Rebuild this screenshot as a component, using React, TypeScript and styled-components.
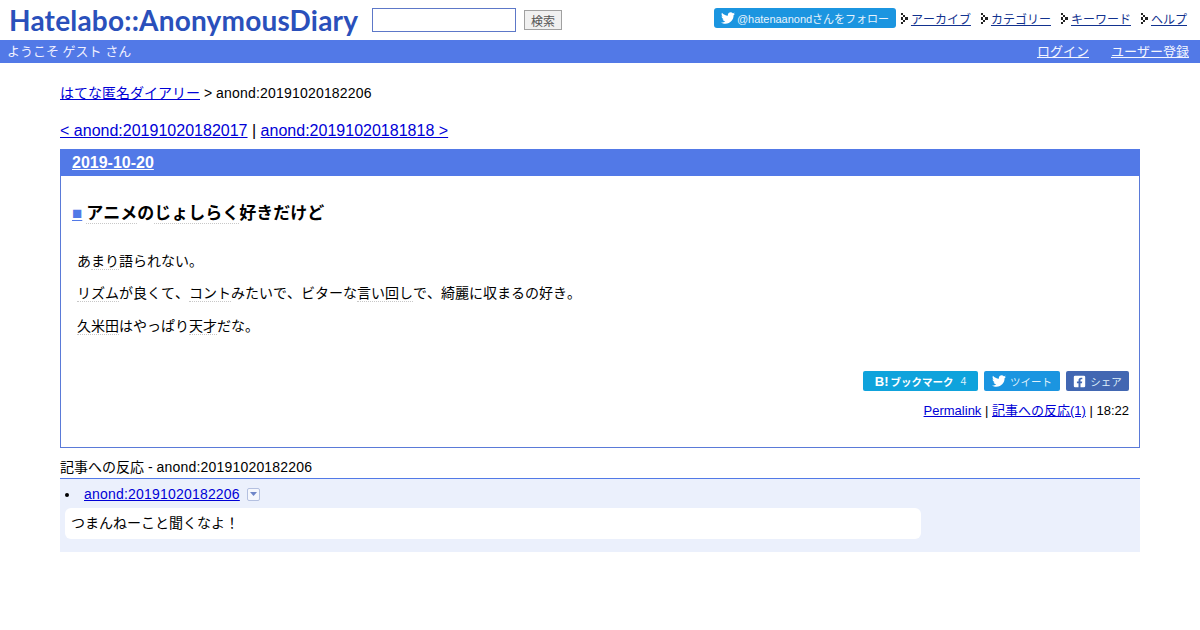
import React from "react";
import styled, { createGlobalStyle } from "styled-components";
import { FaTwitter, FaFacebookSquare } from "react-icons/fa";

const Global = createGlobalStyle`
  html, body { margin: 0; padding: 0; background: #fff; }
  body { font-family: "Liberation Sans", "Noto Sans CJK JP", sans-serif; font-size: 14px; color: #000; text-spacing-trim: space-all; font-kerning: none; }
  a { color: #0000d6; }
`;

const Page = styled.div`width: 1200px; height: 630px; overflow: hidden;`;
const Header = styled.header`height: 40px; display: flex; align-items: center; padding: 0 13px 0 9px; box-sizing: border-box;`;
const Logo = styled.div`
  width: 349px; font-size: 28px; line-height: 40px; font-weight: 700; color: #2a50bb; white-space: nowrap;
  font-family: "Lato", "Liberation Sans", sans-serif; letter-spacing: 0.2px; font-kerning: normal;
`;
const SearchInput = styled.input`
  width: 144px; height: 24px; box-sizing: border-box; margin-left: 14px; border: 1px solid #5d78c8; padding: 0; background: #fff;
`;
const SearchButton = styled.button`
  width: 38px; height: 20px; margin-left: 8px; padding: 0; border: 1px solid #a0a0a0; background: #f0f0f0; color: #555; font: 12px "Liberation Sans", "Noto Sans CJK JP", sans-serif;
`;
const HeaderRight = styled.div`margin-left: auto; display: flex; align-items: center; height: 20px; margin-top: -4px;`;
const FollowButton = styled.a`
  height: 20px; width: 182px; box-sizing: border-box; padding-left: 7px; border-radius: 3px; background: #1b95e0; color: #e6f3fc; display: flex; align-items: center; gap: 2px; font-size: 11px; letter-spacing: -0.02px; text-decoration: none; white-space: nowrap; margin-right: 5px;
  svg { color: #fff; }
`;
const NavItem = styled.a`
  display: flex; align-items: center; gap: 3px; font-size: 12px; color: #12328f; margin-right: 10px; white-space: nowrap;
  &:last-child { margin-right: 0; }
`;
const Bar = styled.div`height: 23px; box-sizing: border-box; padding: 0 11px 2px 7px; background: #5279e7; color: #f0f0ff; display: flex; justify-content: space-between; align-items: center; font-size: 13px;`;
const BarLinks = styled.div`display: flex; gap: 22px; a { color: #f4f6ff; }`;
const Content = styled.main`padding: 21px 60px 0;`;
const Crumb = styled.div`line-height: 18px; height: 18px;`;
const Latin = styled.span`letter-spacing: 0.2px;`;
const Pager = styled.div`font-size: 16px; line-height: 20px; margin-top: 19px; height: 20px; letter-spacing: 0.01px;`;
const Section = styled.section`margin-top: 8px; border: 1px solid #5a7ad8; height: 299px; box-sizing: border-box;`;
const DateHead = styled.h2`
  margin: -1px -1px 0; height: 27px; background: #5279e7; font-size: 16px; line-height: 27px; padding-left: 12px;
  a { color: #fff; }
`;
const Title = styled.h3`
  margin: 26px 0 0 11px; font-size: 17px; line-height: 24px; display: flex; gap: 4px; font-weight: 700;
`;
const Square = styled.a`color: #5279e7; font-size: 17px; font-family: "Liberation Sans", sans-serif;`;
const KW = styled.span`border-bottom: 1px dotted #c8c8c8;`;
const Body = styled.div`
  margin: 25px 0 0 16px;
  p { margin: 0 0 12px; line-height: 20px; }
  p + p + p { margin-top: 13px; }
`;
const Share = styled.div`display: flex; justify-content: flex-end; gap: 6px; margin: 35px 10px 0 0;`;
const ShareBtn = styled.a<{ $bg: string; $w: number }>`
  height: 20px; width: ${p => p.$w}px; background: ${p => p.$bg}; border-radius: 2px; color: #dff0fb; display: flex; align-items: center; justify-content: center; gap: 4px; font-size: 10.5px; white-space: nowrap; box-sizing: border-box; text-decoration: none;
  svg { color: #fff; }
`;
const BookmarkLabel = styled.b`color: #fff; font-size: 10.5px; b { font-size: 13px; margin-right: -1px; }`;
const Count = styled.span`margin-left: 3px; font-weight: 400;`;
const Meta = styled.div`text-align: right; font-size: 13px; margin: 11px 10px 0 0; line-height: 18px;`;
const RefTitle = styled.div`margin-top: 10px; line-height: 18px; height: 20px; border-bottom: 1px solid #5279e7;`;
const RefBox = styled.div`background: #ebf0fc; height: 73px; padding: 6px 5px 0; box-sizing: border-box;`;
const RefRow = styled.ul`margin: 0; padding: 0 0 0 15px; li { padding-left: 4px; height: 18px; line-height: 18px; }`;
const Expand = styled.span`
  display: inline-flex; width: 13px; height: 13px; margin-left: 7px; box-sizing: border-box; border: 1px solid #b4c0e0; border-radius: 2px; background: #f5f7fd; align-items: center; justify-content: center; vertical-align: 3px;
`;
const RefCard = styled.div`margin-top: 5px; width: 856px; height: 31px; box-sizing: border-box; background: #fff; border-radius: 6px; padding: 0 6px; line-height: 31px;`;

const Arrow = () => (
  <svg width="7" height="11" viewBox="0 0 7 11" aria-hidden="true">
    <path d="M0 0h2v2H0zM2 2h2v2H2zM4 4h3v3H4zM2 7h2v2H2zM0 9h2v2H0zM0 4h2v3H0z" fill="#222" />
  </svg>
);

export default function App() {
  return (
    <Page>
      <Global />
      <Header>
        <Logo>Hatelabo::AnonymousDiary</Logo>
        <SearchInput />
        <SearchButton>検索</SearchButton>
        <HeaderRight>
          <FollowButton><FaTwitter size={14} />@hatenaanondさんをフォロー</FollowButton>
          <NavItem href="#"><Arrow />アーカイブ</NavItem>
          <NavItem href="#"><Arrow />カテゴリー</NavItem>
          <NavItem href="#"><Arrow />キーワード</NavItem>
          <NavItem href="#"><Arrow />ヘルプ</NavItem>
        </HeaderRight>
      </Header>
      <Bar>
        <span>ようこそ ゲスト さん</span>
        <BarLinks><a href="#">ログイン</a><a href="#">ユーザー登録</a></BarLinks>
      </Bar>
      <Content>
        <Crumb><a href="#">はてな匿名ダイアリー</a> &gt; <Latin>anond:20191020182206</Latin></Crumb>
        <Pager><a href="#">&lt; anond:20191020182017</a> | <a href="#">anond:20191020181818 &gt;</a></Pager>
        <Section>
          <DateHead><a href="#">2019-10-20</a></DateHead>
          <Title>
            <Square href="#">■</Square>
            <span><KW>アニメ</KW>の<KW>じょしらく</KW>好きだけど</span>
          </Title>
          <Body>
            <p>あ<KW>まり</KW>語られない。</p>
            <p><KW>リズム</KW>が良くて、<KW>コント</KW>みたいで、ビターな<KW>言い回し</KW>で、綺麗に収まるの好き。</p>
            <p><KW>久米田</KW>はやっぱり<KW>天才</KW>だな。</p>
          </Body>
          <Share>
            <ShareBtn $bg="#0fa3dc" $w={115} href="#"><BookmarkLabel><b>B!</b> ブックマーク</BookmarkLabel><Count>4</Count></ShareBtn>
            <ShareBtn $bg="#1b95e0" $w={76} href="#"><FaTwitter size={14} />ツイート</ShareBtn>
            <ShareBtn $bg="#4267b2" $w={63} href="#"><FaFacebookSquare size={13} />シェア</ShareBtn>
          </Share>
          <Meta><a href="#">Permalink</a> | <a href="#">記事への反応(1)</a> | 18:22</Meta>
        </Section>
        <RefTitle>記事への反応 - <Latin>anond:20191020182206</Latin></RefTitle>
        <RefBox>
          <RefRow>
            <li><a href="#"><Latin>anond:20191020182206</Latin></a>
              <Expand>
                <svg width="7" height="4" viewBox="0 0 7 4" aria-hidden="true"><path d="M0 0h7L3.5 4z" fill="#6f86c8" /></svg>
              </Expand>
            </li>
          </RefRow>
          <RefCard>つまんねーこと聞くなよ！</RefCard>
        </RefBox>
      </Content>
    </Page>
  );
}
